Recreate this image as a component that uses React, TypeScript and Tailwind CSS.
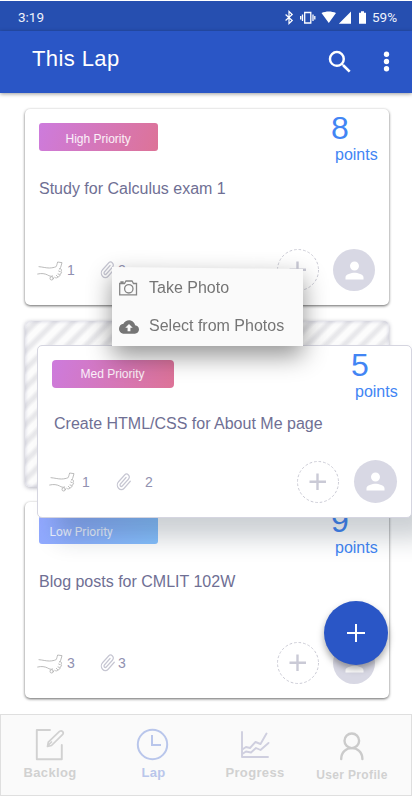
import type { ReactNode } from "react";

function ThumbIcon() {
  return (
    <svg viewBox="109 464 78 63" className="h-[21px] w-[26px] shrink-0" fill="none" stroke="#b0b0b0" strokeWidth="2.6" strokeLinecap="round" strokeLinejoin="round">
      <path d="M115 484c12 1 20 4 31 4 9 0 14-2 19-3 4-4 4-10 6-15l13 2-4 14-3 5" />
      <path d="M177 490c6 0 7 4 4 8 3 3 1 7-3 9 1 4-2 7-6 8-2 3-6 4-10 1" />
      <path d="M111 506c12-3 22-1 30 3 5 3 9 5 15 3" />
      <path d="M174 497l4 2m-6 7 4 1m-9 3 4 4" />
      <circle cx="153" cy="519" r="5" />
    </svg>
  );
}

function ClipIcon() {
  return (
    <svg viewBox="0 0 24 24" className="h-[18px] w-4 shrink-0" preserveAspectRatio="none" fill="none" stroke="#c6c6d2" strokeWidth="1.800" strokeLinecap="round" strokeLinejoin="round">
      <path d="M21.440 11.050l-9.190 9.190a6 6 0 0 1-8.490-8.490l9.190-9.190a4 4 0 0 1 5.660 5.660l-9.200 9.190a2 2 0 0 1-2.830-2.830l8.490-8.480" />
    </svg>
  );
}

function AddCircle() {
  return (
    <svg viewBox="0 0 42 42" className="size-[42px] shrink-0" fill="none">
      <circle cx="21" cy="21" r="20.5" stroke="#cbcbd5" strokeDasharray="2.6 2" />
      <path d="M20.500 12.500v16.500M12.500 20.800h16.500" stroke="#cacad6" strokeWidth="2.400" />
    </svg>
  );
}

function Avatar({ className }: { className: string }) {
  return (
    <div className={`flex shrink-0 items-center justify-center rounded-full bg-[#d8d8e4] ${className}`}>
      <svg viewBox="0 0 24 24" className="size-[27px]" fill="#fff">
        <path d="M12 12c2.210 0 4-1.790 4-4s-1.790-4-4-4-4 1.790-4 4 1.790 4 4 4zm0 2c-2.670 0-8 1.340-8 4v2h16v-2c0-2.660-5.330-4-8-4z" />
      </svg>
    </div>
  );
}

function Points({ value }: { value: number }) {
  return (
    <div className="flex w-[55px] shrink-0 flex-col pt-px text-[#4285f4]">
      <span className="pl-[5px] text-[32px] leading-[37px]">{value}</span>
      <span className="pl-[9px] text-base leading-4">points</span>
    </div>
  );
}

type TaskProps = { tag: ReactNode; title: string; points: number; likes: number; files: number };

function TaskCard({ tag, title, points, likes, files }: TaskProps) {
  return (
    <section className="flex h-[196px] shrink-0 flex-col rounded-[5px] bg-white shadow-[0_1px_3px_rgba(0,0,0,0.6)]">
      <div className="flex h-[62px] items-start justify-between pl-[14px] pr-[8px]">
        <div className="pt-[14px]">{tag}</div>
        <Points value={points} />
      </div>
      <h2 className="pl-[14px] pt-[10px] text-base leading-4 text-[#6f6f94]">{title}</h2>
      <div className="mt-auto flex h-[56px] items-start pl-[12px] pr-[14px]">
        <div className="flex h-[42px] items-center text-sm text-[#9191b0]">
          <ThumbIcon />
          <span className="w-[37px] pl-[4px]">{likes}</span>
          <ClipIcon />
          <span className="pl-[2px]">{files}</span>
        </div>
        <div className="ml-auto flex gap-[14px]">
          <AddCircle />
          <Avatar className="size-[42px]" />
        </div>
      </div>
    </section>
  );
}

function StatusBar() {
  return (
    <div className="flex h-[30px] items-center bg-[#264fb0] pl-[18px] font-[Roboto,sans-serif] text-[#eef2fb]">
      <span className="pt-[3px] text-[13.500px] leading-none">3:19</span>
      <svg viewBox="284 10 84 16" className="ml-auto mt-[3px] h-4 w-[84px]" fill="#fff">
        <path d="M285.600 14.500l6.600 6-3.200 3v-12l3.200 3-6.600 6" fill="none" stroke="#fff" strokeWidth="1.200" />
        <path d="M304.700 12.500h6.100v10.500h-6.100zM302.500 14.500v6.500M313 14.500v6.500M300.700 16v3.500M314.800 16v3.500" fill="none" stroke="#fff" strokeWidth="1.300" />
        <path d="M321.500 13c4.500-2 10-2 14.500 0l-7.200 10zM351 11.500v12.200h-12.200zM361 11.300h3v1.400h2v11h-7v-11h2z" />
      </svg>
      <span className="w-[44px] pl-1 pt-[3px] text-[13.500px] leading-none">59%</span>
    </div>
  );
}

function AppBar() {
  return (
    <header className="flex h-[62px] items-center bg-[#2a56c6] pl-8 pr-[11px] text-white shadow-[0_1px_4px_rgba(0,0,0,0.4)]">
      <h1 className="pb-[7px] text-[22px] leading-7 tracking-[0.400px]">This Lap</h1>
      <svg viewBox="0 0 24 24" className="ml-auto size-[30px]" fill="currentColor">
        <path d="M15.500 14h-.79l-.28-.27A6.471 6.471 0 0 0 16 9.500 6.500 6.500 0 1 0 9.500 16c1.610 0 3.090-.59 4.230-1.570l.27.28v.79l5 4.990L20.490 19l-4.990-5zm-6 0C7.010 14 5 11.990 5 9.500S7.010 5 9.500 5 14 7.010 14 9.500 11.990 14 9.500 14z" />
      </svg>
      <svg viewBox="0 0 24 24" className="ml-[17px] mb-[2px] size-[29px]" fill="currentColor">
        <circle cx="12" cy="6" r="2.200" />
        <circle cx="12" cy="12" r="2.200" />
        <circle cx="12" cy="18" r="2.200" />
      </svg>
    </header>
  );
}

function DraggedCard() {
  return (
    <section className="absolute left-[37px] top-[345px] flex h-[173px] w-[375px] flex-col rounded-[5px] border border-[#d5d5e0] bg-white shadow-[20px_20px_24px_rgba(24,40,60,0.22)]">
      <div className="flex h-[60px] items-start justify-between pl-[13.500px] pr-[10px]">
        <div className="mt-[14px] h-[28px] w-[122px] rounded-[4px] bg-linear-[110deg,#cd7bdd,#dd7397] pl-[29px] text-xs leading-[28px] text-white/90">Med Priority</div>
        <Points value={5} />
      </div>
      <h2 className="pl-[16px] pt-[10px] text-base leading-4 text-[#6f6f94]">Create HTML/CSS for About Me page</h2>
      <div className="mt-auto flex h-[57px] items-start pl-[11px] pr-[14px]">
        <div className="flex h-[43px] items-center text-sm text-[#9191b0]">
          <ThumbIcon />
          <span className="w-[41px] pl-[7px]">1</span>
          <ClipIcon />
          <span className="pl-[13px]">2</span>
        </div>
        <div className="ml-auto flex items-center gap-[15px]">
          <AddCircle />
          <Avatar className="size-[43px]" />
        </div>
      </div>
    </section>
  );
}

function PhotoMenu() {
  return (
    <div className="absolute left-[112px] top-[267px] [filter:drop-shadow(0_10px_12px_rgba(0,0,0,0.42))]">
      <div className="flex h-[79px] w-[191px] flex-col bg-[#fafafa] pl-[7px] pt-[2px] text-base text-[#757575] [clip-path:polygon(0_0,100%_2px,100%_100%,0_100%)]">
        <div className="flex h-[38px] items-center">
          <svg viewBox="0 0 20 16" className="h-4 w-5" fill="none" stroke="#858585" strokeWidth="1.300">
            <path d="M.7 3.500h4.800L7 1h6l1.500 2.500H17.500v11.300H.7zM2 3.500V2h2v1.500" />
            <circle cx="9.800" cy="8.800" r="4.200" />
          </svg>
          <span className="pl-[10px]">Take Photo</span>
        </div>
        <div className="flex h-[38px] items-center">
          <svg viewBox="0 0 24 24" className="mt-px size-5" fill="#757575">
            <path d="M19.350 10.040C18.670 6.590 15.640 4 12 4 9.110 4 6.600 5.640 5.350 8.040 2.340 8.360 0 10.910 0 14c0 3.310 2.690 6 6 6h13c2.760 0 5-2.240 5-5 0-2.640-2.050-4.780-4.650-4.960zM13.700 13v4h-3.400v-4H7.500l4.500-4.500 4.500 4.500z" />
          </svg>
          <span className="pl-[10px]">Select from Photos</span>
        </div>
      </div>
    </div>
  );
}

function BottomNav() {
  return (
    <nav className="mt-auto flex h-[82px] shrink-0 border border-[#dfdfdf] bg-[#fafafa] font-bold tracking-[0.350px] text-[#d1d1d1]">
      <div className="flex w-[98px] flex-col items-center pt-[12px]">
        <svg viewBox="34 727 32 35" className="h-[35px] w-8" fill="none" stroke="currentColor" strokeWidth="1.900" strokeLinecap="round" strokeLinejoin="round">
          <path d="M50 730H36.800v29.300h25V745" />
          <path d="M47.500 746.500l.8-4.300 11.200-10.800c2.400-1.600 5 1 3 3.300L51.500 745.500zM48.500 745l3-3" strokeWidth="1.700" />
        </svg>
        <span className="pt-[3px] text-[13px] leading-4">Backlog</span>
      </div>
      <div className="flex w-[108px] flex-col items-center pt-[12px] text-[#b9c6eb]">
        <svg viewBox="137 727 34 35" className="h-[35px] w-[34px]" fill="none" stroke="currentColor" strokeWidth="2">
          <circle cx="153.500" cy="744.500" r="14.700" />
          <path d="M153 735v10h9" strokeWidth="2" />
        </svg>
        <span className="pl-px pt-[3px] text-[13px] leading-4">Lap</span>
      </div>
      <div className="flex w-[96px] flex-col items-center pt-[12px]">
        <svg viewBox="239 727 32 35" className="h-[35px] w-8" fill="none" stroke="#cfcfdf" strokeWidth="1.900" strokeLinecap="round" strokeLinejoin="round">
          <path d="M242 732v25h26" />
          <path d="M243 749l3-2 4 1 5.500-6 5 2 6-10.500M243 753.500l3-2 5 1 5-4.500 4.500 2 8-7" />
        </svg>
        <span className="pt-[3px] text-[13px] leading-4">Progress</span>
      </div>
      <div className="flex w-[98px] flex-col items-center pt-[12px]">
        <svg viewBox="337 727 30 35" className="h-[35px] w-[30px]" fill="none" stroke="#cbcbcb" strokeWidth="2.400" strokeLinecap="round">
          <circle cx="351.800" cy="740.800" r="7.300" />
          <path d="M341.200 759c0-14.500 21.200-14.500 21.200 0" />
        </svg>
        <span className="whitespace-nowrap pt-[5px] text-xs leading-4">User Profile</span>
      </div>
    </nav>
  );
}

export default function App() {
  return (
    <div className="relative flex h-[796px] w-[412px] flex-col overflow-hidden bg-white pt-px font-['Liberation_Sans',Arial,sans-serif]">
      <StatusBar />
      <AppBar />
      <main className="flex flex-col pl-[25px] pr-[23px] pt-4">
        <TaskCard
          title="Study for Calculus exam 1"
          points={8}
          likes={1}
          files={2}
          tag={<div className="h-7 w-[119px] rounded-[3px] bg-linear-[110deg,#cd7bdd,#dd7397] pl-[26.500px] text-xs leading-[32px] text-white/90">High Priority</div>}
        />
        <div className="mb-[15px] mt-[16px] h-[166px] shrink-0 rounded-[5px] bg-[repeating-linear-gradient(135deg,#fcfcfc_0px,#fcfcfc_4px,#e8e8eb_7.500px,#e8e8eb_9.500px,#fcfcfc_13px)] shadow-[0_1px_4px_rgba(60,60,90,0.4),inset_0_0_4px_rgba(120,120,160,0.35)]" />
        <TaskCard
          title="Blog posts for CMLIT 102W"
          points={9}
          likes={3}
          files={3}
          tag={<div className="h-7 w-[119px] rounded-[3px] bg-linear-[110deg,#92a8ff,#86c2ff] pl-[10.500px] font-[Roboto,sans-serif] text-xs leading-[32px] text-white/85">Low Priority</div>}
        />
      </main>
      <BottomNav />
      <DraggedCard />
      <PhotoMenu />
      <button aria-label="Add" className="absolute left-[323.500px] top-[600.500px] flex size-16 items-center justify-center rounded-full bg-[#2a56c6] shadow-[0_4px_7px_rgba(0,0,0,0.35)]">
        <svg viewBox="0 0 20 20" className="size-5" fill="none" stroke="#fff" strokeWidth="2">
          <path d="M10 1v18M1 10h18" />
        </svg>
      </button>
    </div>
  );
}
